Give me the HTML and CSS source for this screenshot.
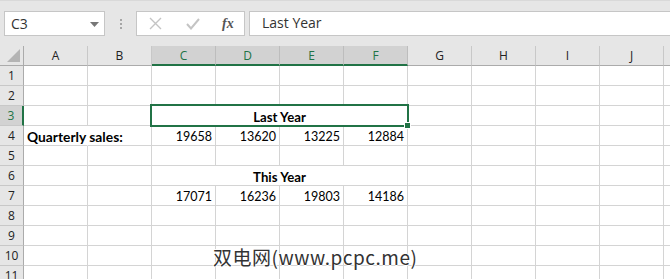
FILE: index.html
```html
<!DOCTYPE html>
<html lang="en">
<head>
  <meta charset="UTF-8" />
  <title>Quarterly sales</title>
  <link rel="stylesheet" href="styles.css">
</head>
<body>
  <div class="toolbar">
    <div class="namebox">
      <span>C3</span>
      <svg class="caret" width="9" height="5" viewBox="0 0 9 5"><path d="M0 0h9L4.5 5z" fill="#777"/></svg>
    </div>
    <div class="grip"><i></i><i></i><i></i></div>
    <div class="fxbox">
      <svg width="13" height="13" viewBox="0 0 13 13"><path d="M1 1l11 11M12 1L1 12" stroke="#c4c4c4" stroke-width="1.4" fill="none"/></svg>
      <svg width="14" height="12" viewBox="0 0 14 12"><path d="M1 6l4 4.5L13 1" stroke="#c4c4c4" stroke-width="2" fill="none"/></svg>
      <span class="fx">fx</span>
    </div>
    <div class="formula">Last Year</div>
  </div>

  <div class="sheet" id="sheet"></div>
  <div class="mark">双电网(www.pcpc.me)</div>

  <script>
    const sheet = document.getElementById('sheet');
    const cols = ['A','B','C','D','E','F','G','H','I','J',''];
    const selCols = ['C','D','E','F'];

    // rows with content, everything else is empty
    const data = {
      3: { merged: 'Last Year', selected: true },
      4: { A: 'Quarterly sales:', C: 19658, D: 13620, E: 13225, F: 12884 },
      6: { merged: 'This Year' },
      7: { C: 17071, D: 16236, E: 19803, F: 14186 }
    };

    function cell(cls, text) {
      const d = document.createElement('div');
      d.className = cls;
      if (text !== undefined) d.textContent = text;
      sheet.appendChild(d);
      return d;
    }

    cell('corner');
    cols.forEach(c => {
      cell('colhead' + (selCols.includes(c) ? ' sel' : ''), c);
    });

    for (let r = 1; r <= 11; r++) {
      const row = data[r] || {};
      cell('rowhead' + (row.selected ? ' sel' : ''), r);
      cols.forEach(c => {
        if (row.merged && selCols.includes(c)) {
          if (c === 'C') cell('cell merged' + (row.selected ? ' active' : ''), row.merged);
          return;
        }
        const v = row[c];
        let cls = 'cell';
        if (typeof v === 'number') cls += ' num';
        if (c === 'A' && v) cls += ' label';
        cell(cls, v === undefined ? '' : v);
      });
    }
  </script>
</body>
</html>
```

FILE: styles.css
```css
body {
  margin: 0;
  background: #fff;
  overflow: hidden;
  font-family: "Open Sans", sans-serif;
  color: #222;
}

.toolbar {
  height: 46px;
  box-sizing: border-box;
  background: #e6e6e6;
  border-top: 1px solid #d9d9d9;
  display: flex;
  align-items: flex-start;
  padding-top: 10px;
}

.namebox {
  margin-left: 4px;
  width: 101px;
  height: 25px;
  box-sizing: border-box;
  border: 1px solid #c6c6c6;
  background: #fff;
  display: flex;
  align-items: center;
  justify-content: space-between;
  padding: 0 5px 0 6px;
  font-size: 14px;
  color: #333;
}

.caret {
  margin-top: 1px;
}

.grip {
  width: 31px;
  height: 25px;
  display: flex;
  flex-direction: column;
  align-items: center;
  justify-content: center;
  gap: 2px;
}

.grip i {
  width: 2px;
  height: 2px;
  background: #a6a6a6;
}

.fxbox {
  width: 109px;
  height: 25px;
  box-sizing: border-box;
  border: 1px solid #c6c6c6;
  background: #fff;
  display: flex;
  align-items: center;
  padding-left: 12px;
  gap: 24px;
}

.fx {
  font-family: "Liberation Serif", serif;
  font-style: italic;
  font-weight: bold;
  font-size: 14px;
  color: #555;
  margin-left: -2px;
}

.formula {
  margin-left: 4px;
  flex: 1;
  height: 25px;
  box-sizing: border-box;
  border: 1px solid #c6c6c6;
  border-right: none;
  background: #fff;
  padding-left: 12px;
  font-size: 14px;
  line-height: 22px;
  color: #333;
}

.sheet {
  display: grid;
  grid-template-columns: 24px repeat(10, 64px) 1fr;
  grid-template-rows: 20px;
  grid-auto-rows: 20px;
}

.sheet > div {
  box-sizing: border-box;
}

.corner {
  background: #e6e6e6;
  border-right: 1px solid #ababab;
  border-bottom: 1px solid #ababab;
  position: relative;
}

.corner::after {
  content: "";
  position: absolute;
  right: 3px;
  bottom: 3px;
  border-style: solid;
  border-width: 0 0 13px 13px;
  border-color: transparent transparent #b4b4b4 transparent;
}

.colhead {
  background: #e6e6e6;
  border-right: 1px solid #c8c8c8;
  border-bottom: 1px solid #ababab;
  text-align: center;
  font-size: 12px;
  line-height: 19px;
  color: #222;
}

.colhead.sel {
  background: #d2d2d2;
  color: #217346;
  border-bottom: 2px solid #217346;
  border-right-color: #bdbdbd;
}

.rowhead {
  background: #e6e6e6;
  border-right: 1px solid #ababab;
  border-bottom: 1px solid #c8c8c8;
  text-align: center;
  font-size: 12px;
  line-height: 20px;
  color: #222;
}

.rowhead.sel {
  background: #d2d2d2;
  color: #217346;
  border-right: 2px solid #217346;
}

.cell {
  border-right: 1px solid #d4d4d4;
  border-bottom: 1px solid #d4d4d4;
  font-family: Lato, "Open Sans", sans-serif;
  font-size: 12.5px;
  line-height: 18px;
  padding: 2px 3px 0;
  white-space: nowrap;
  color: #000;
}

.cell.num {
  text-align: right;
}

.cell.label {
  font-weight: bold;
  font-size: 13.8px;
  line-height: 17px;
  border-right-color: transparent;
}

.cell.merged {
  grid-column: span 4;
  text-align: center;
  font-weight: bold;
  font-size: 13.2px;
  position: relative;
}

.cell.active::after {
  content: "";
  position: absolute;
  left: -2px;
  top: -2px;
  right: -2px;
  bottom: -2px;
  border: 2px solid #217346;
}

.cell.active::before {
  content: "";
  position: absolute;
  right: -4px;
  bottom: -4px;
  width: 5px;
  height: 5px;
  background: #217346;
  border: 1px solid #fff;
  z-index: 1;
}

.mark {
  position: absolute;
  left: 213px;
  top: 243px;
  font-family: "Noto Sans CJK SC", sans-serif;
  font-size: 19px;
  letter-spacing: 0.5px;
  color: #333;
  text-shadow: 1px 0 #fff, -1px 0 #fff, 0 1px #fff, 0 -1px #fff;
}
```
